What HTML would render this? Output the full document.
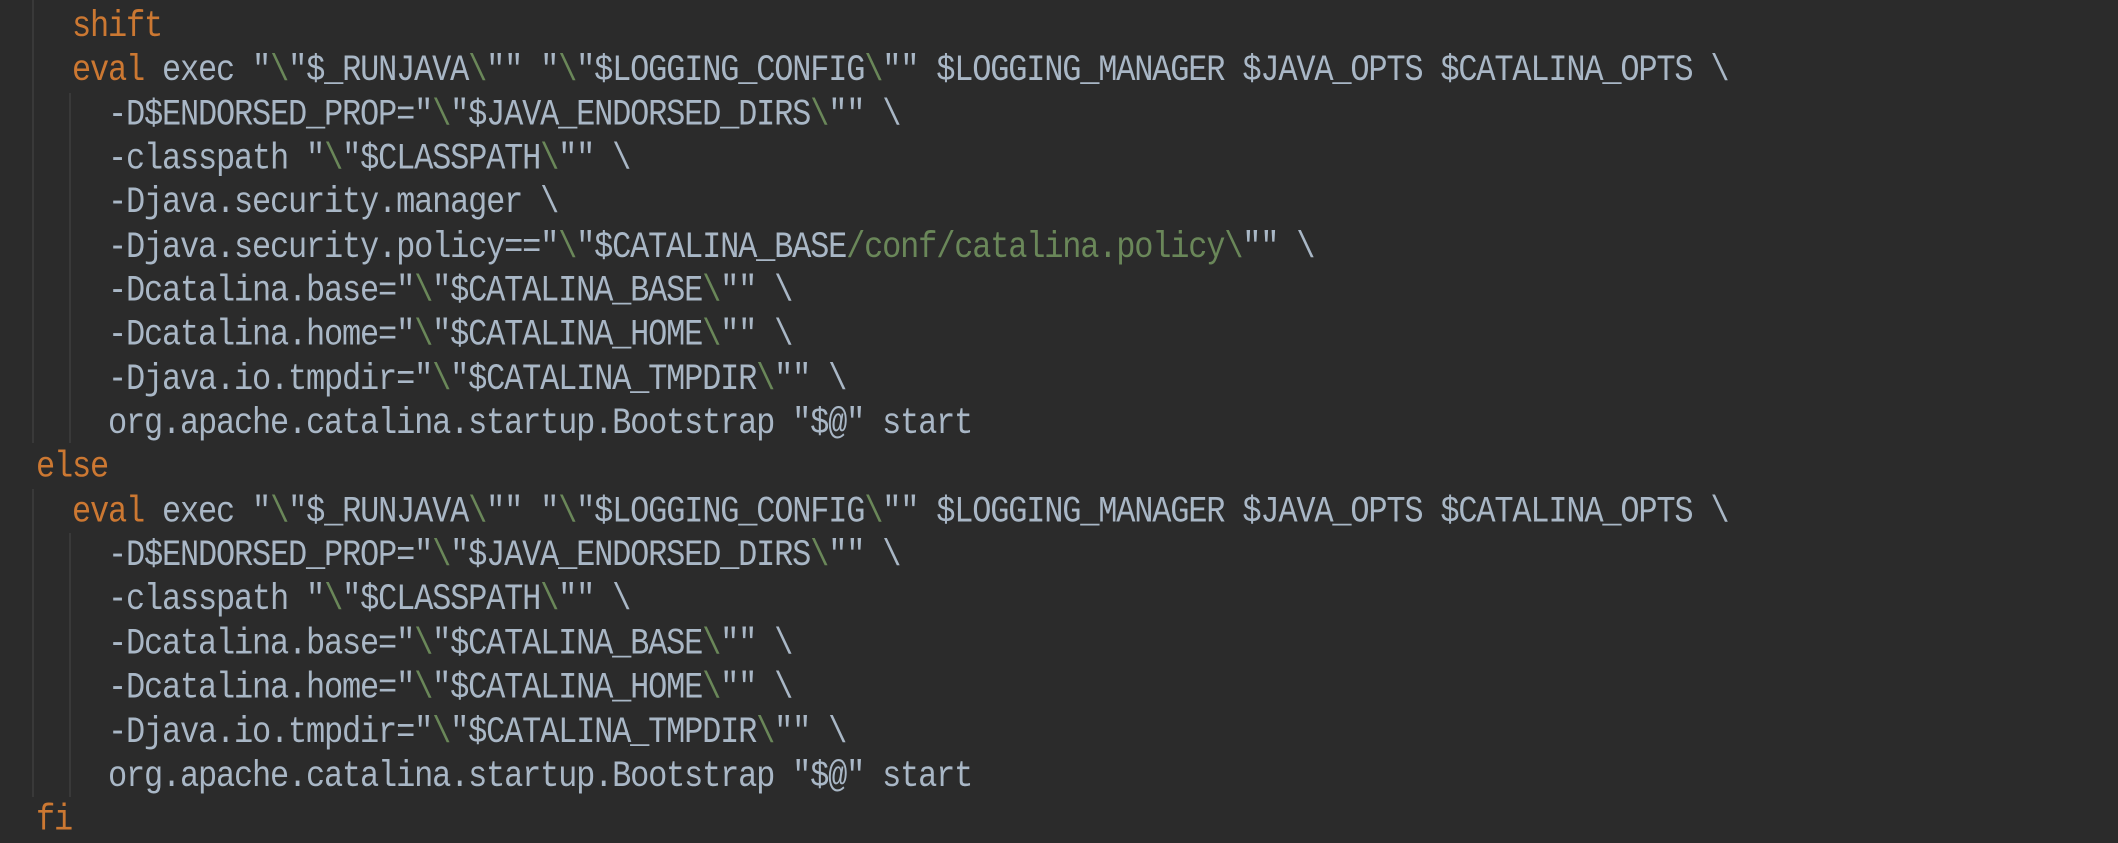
<!DOCTYPE html>
<html><head><meta charset="utf-8"><style>
html,body{margin:0;padding:0;background:#2b2b2b;width:2118px;height:834px;overflow:hidden}
.code{position:absolute;left:36px;top:5px;font-family:"Liberation Mono",monospace;font-size:32px;letter-spacing:-1.2px;line-height:38.35px;color:#a9b7c6;white-space:pre;transform:scaleY(1.15);transform-origin:0 0}
.k{color:#cc7832}.g{color:#6a8759}
.v{position:absolute;width:2px;background:#393939}
</style></head><body>
<div class="v" style="left:32px;top:0;height:443px"></div>
<div class="v" style="left:69px;top:93px;height:350px"></div>
<div class="v" style="left:32px;top:489px;height:308px"></div>
<div class="v" style="left:69px;top:533px;height:264px"></div>
<div class="code">  <span class="k">shift</span>
  <span class="k">eval</span> exec "<span class="g">\</span>"$_RUNJAVA<span class="g">\</span>"" "<span class="g">\</span>"$LOGGING_CONFIG<span class="g">\</span>"" $LOGGING_MANAGER $JAVA_OPTS $CATALINA_OPTS \
    -D$ENDORSED_PROP="<span class="g">\</span>"$JAVA_ENDORSED_DIRS<span class="g">\</span>"" \
    -classpath "<span class="g">\</span>"$CLASSPATH<span class="g">\</span>"" \
    -Djava.security.manager \
    -Djava.security.policy=="<span class="g">\</span>"$CATALINA_BASE<span class="g">/conf/catalina.policy\</span>"" \
    -Dcatalina.base="<span class="g">\</span>"$CATALINA_BASE<span class="g">\</span>"" \
    -Dcatalina.home="<span class="g">\</span>"$CATALINA_HOME<span class="g">\</span>"" \
    -Djava.io.tmpdir="<span class="g">\</span>"$CATALINA_TMPDIR<span class="g">\</span>"" \
    org.apache.catalina.startup.Bootstrap "$@" start
<span class="k">else</span>
  <span class="k">eval</span> exec "<span class="g">\</span>"$_RUNJAVA<span class="g">\</span>"" "<span class="g">\</span>"$LOGGING_CONFIG<span class="g">\</span>"" $LOGGING_MANAGER $JAVA_OPTS $CATALINA_OPTS \
    -D$ENDORSED_PROP="<span class="g">\</span>"$JAVA_ENDORSED_DIRS<span class="g">\</span>"" \
    -classpath "<span class="g">\</span>"$CLASSPATH<span class="g">\</span>"" \
    -Dcatalina.base="<span class="g">\</span>"$CATALINA_BASE<span class="g">\</span>"" \
    -Dcatalina.home="<span class="g">\</span>"$CATALINA_HOME<span class="g">\</span>"" \
    -Djava.io.tmpdir="<span class="g">\</span>"$CATALINA_TMPDIR<span class="g">\</span>"" \
    org.apache.catalina.startup.Bootstrap "$@" start
<span class="k">fi</span></div>
</body></html>
